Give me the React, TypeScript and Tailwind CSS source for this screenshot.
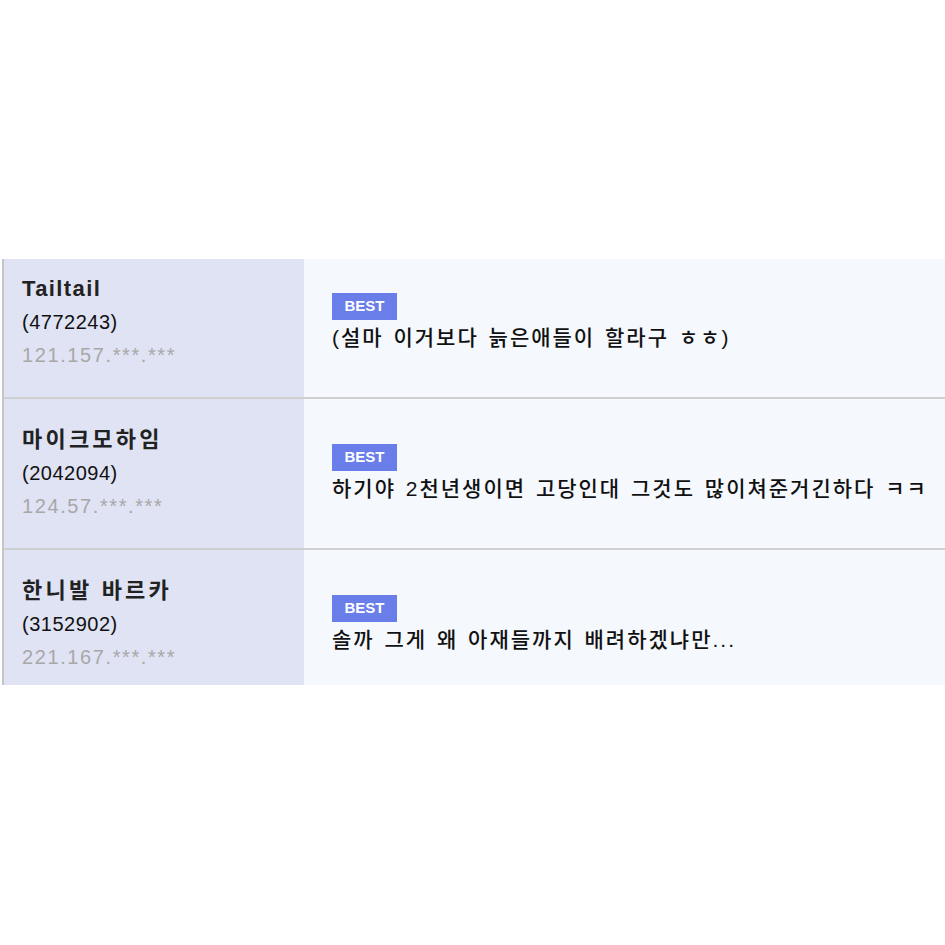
import React from "react";

type Row = { name: string; nameTrack: string; id: string; ip: string; text: string };

const rows: Row[] = [
  { name: "Tailtail", nameTrack: "tracking-[1.4px]", id: "(4772243)", ip: "121.157.***.***", text: "(설마 이거보다 늙은애들이 할라구 ㅎㅎ)" },
  { name: "마이크모하임", nameTrack: "tracking-[3.2px]", id: "(2042094)", ip: "124.57.***.***", text: "하기야 2천년생이면 고당인대 그것도 많이쳐준거긴하다 ㅋㅋ" },
  { name: "한니발 바르카", nameTrack: "tracking-[3.2px]", id: "(3152902)", ip: "221.167.***.***", text: "솔까 그게 왜 아재들까지 배려하겠냐만..." },
];

const font = { fontFamily: '"Liberation Sans", "Noto Sans CJK KR", sans-serif' };

export default function App() {
  return (
    <div className="w-[945px] h-[945px] bg-white overflow-hidden" style={font}>
      <div className="h-[259px]" />
      <div className="ml-[2px] border-l-2 border-[#c6c6c6]">
        {rows.map((r, i) => {
          const first = i === 0;
          const last = i === rows.length - 1;
          return (
            <div
              key={i}
              className={
                "flex " +
                (first ? "h-[140px] " : last ? "h-[135px] " : "h-[151px] ") +
                (last ? "" : "border-b-2 border-[#cfcfcf]")
              }
            >
              <div
                className={
                  "w-[300px] shrink-0 bg-[#dfe3f4] pl-[18px] " + (first ? "pt-[14px]" : "pt-[25px]")
                }
              >
                <div className={"text-[22px] leading-[32px] font-bold text-[#222] " + r.nameTrack}>{r.name}</div>
                <div className="text-[20px] leading-[33px] text-[#111] tracking-[0.5px] pt-[1px]">{r.id}</div>
                <div className="text-[20px] leading-[32px] text-[#a8a8a8] tracking-[1.6px]">{r.ip}</div>
              </div>
              <div className={"flex-1 bg-[#f5f8fd] pl-[28px] " + (first ? "pt-[34px]" : "pt-[45px]")}>
                <div className="w-[65px] h-[27px] bg-[#6a7ee9] text-white text-[15px] font-bold flex items-center justify-center">
                  BEST
                </div>
                <div className="text-[21px] leading-[32px] text-[#111] font-medium mt-[2px] whitespace-nowrap tracking-[2px] [word-spacing:2px]">
                  {r.text}
                </div>
              </div>
            </div>
          );
        })}
      </div>
    </div>
  );
}
